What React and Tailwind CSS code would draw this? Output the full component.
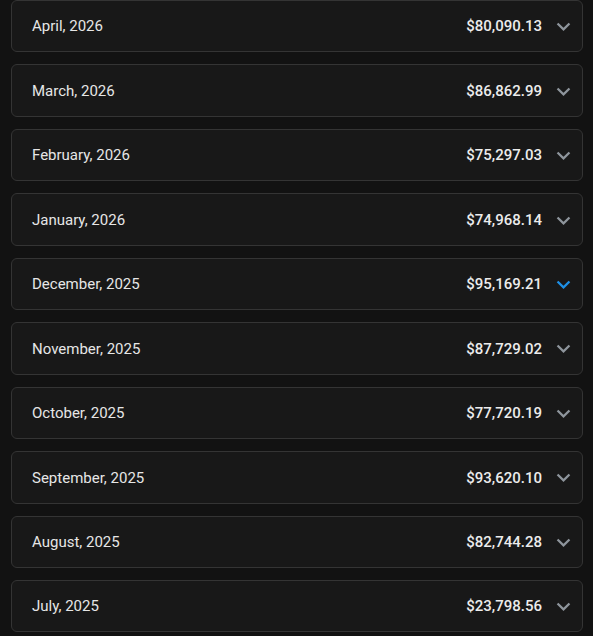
const MONTHS = [
  { label: 'April, 2026', total: '$80,090.13' },
  { label: 'March, 2026', total: '$86,862.99' },
  { label: 'February, 2026', total: '$75,297.03' },
  { label: 'January, 2026', total: '$74,968.14' },
  { label: 'December, 2025', total: '$95,169.21', active: true },
  { label: 'November, 2025', total: '$87,729.02' },
  { label: 'October, 2025', total: '$77,720.19' },
  { label: 'September, 2025', total: '$93,620.10' },
  { label: 'August, 2025', total: '$82,744.28' },
  { label: 'July, 2025', total: '$23,798.56' },
];

const Chevron = ({ active }) => (
  <svg viewBox="0 0 24 24" className={`w-[27px] h-[27px] ${active ? 'fill-[#1e90e6]' : 'fill-[#8e959c]'}`}>
    <path d="M16.59 8.59 12 13.17 7.41 8.59 6 10l6 6 6-6z" />
  </svg>
);

export default function App() {
  return (
    <div className="min-h-[636px] w-[593px] bg-[#121212] font-['Roboto',sans-serif] pl-[11px] pr-[10px]">
      <div className="flex flex-col gap-[12px]">
        {MONTHS.map((m) => (
          <div
            key={m.label}
            className="h-[52.44px] flex items-center rounded-[6px] border border-[#343434] bg-[#181818] pl-[20px] pr-[5px] pt-[1px]"
          >
            <span className="flex-1 text-[15px] text-[#e6e6e6]">{m.label}</span>
            <span className="text-[15px] font-medium text-[#ececec] mr-[8px]">{m.total}</span>
            <Chevron active={m.active} />
          </div>
        ))}
      </div>
    </div>
  );
}
